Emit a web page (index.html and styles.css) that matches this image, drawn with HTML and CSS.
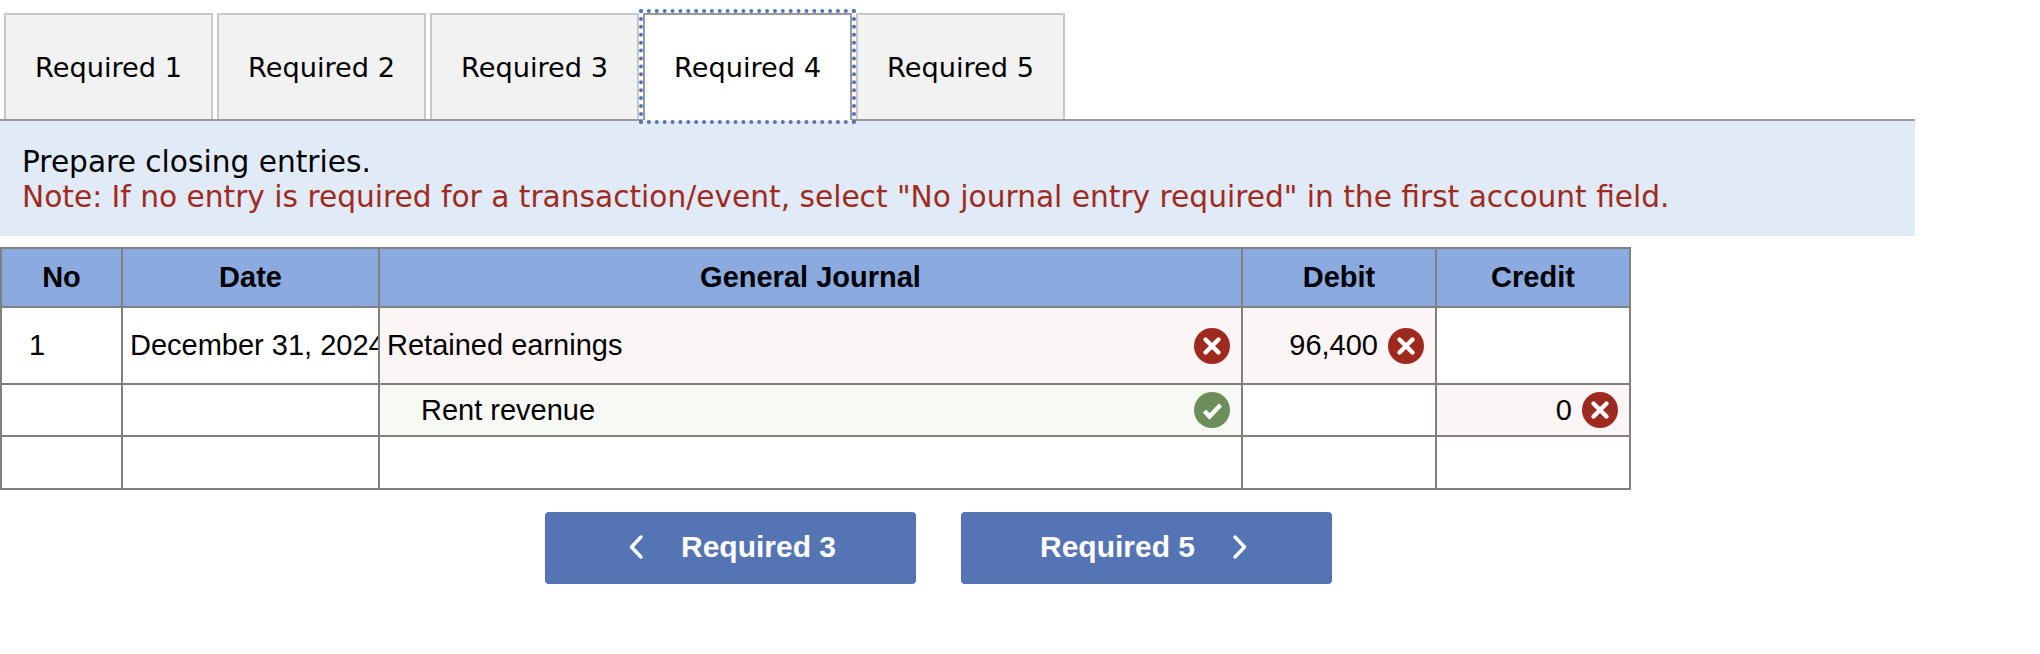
FILE: index.html
```html
<!DOCTYPE html>
<html lang="en">
<head>
    <meta charset="UTF-8">
    <title>Required 4</title>
    <link rel="stylesheet" href="styles.css">
</head>
<body>
    <div class="tabs">
        <div class="tab">Required 1</div>
        <div class="tab">Required 2</div>
        <div class="tab">Required 3</div>
        <div class="tab active">Required 4</div>
        <div class="tab">Required 5</div>
    </div>
    <div class="panel">
        <div>Prepare closing entries.</div>
        <div class="note">Note: If no entry is required for a transaction/event, select "No journal entry required" in the first account field.</div>
    </div>
    <table class="journal">
        <colgroup>
            <col class="col-no">
            <col class="col-date">
            <col class="col-account">
            <col class="col-debit">
            <col class="col-credit">
        </colgroup>
        <tr class="head">
            <th>No</th>
            <th>Date</th>
            <th>General Journal</th>
            <th>Debit</th>
            <th>Credit</th>
        </tr>
        <tr class="row-1">
            <td class="no">1</td>
            <td class="date"><div class="clip">December 31, 2024</div></td>
            <td class="wrong">
                <div class="cell account">Retained earnings
                    <svg class="icon" viewBox="0 0 36 36"><circle cx="18" cy="18" r="18" fill="#9e2a1f"/><path d="M11.5 11.5l13 13M24.5 11.5l-13 13" stroke="#fff" stroke-width="4.4" stroke-linecap="round"/></svg>
                </div>
            </td>
            <td class="wrong">
                <div class="cell amount">96,400
                    <svg class="icon" viewBox="0 0 36 36"><circle cx="18" cy="18" r="18" fill="#9e2a1f"/><path d="M11.5 11.5l13 13M24.5 11.5l-13 13" stroke="#fff" stroke-width="4.4" stroke-linecap="round"/></svg>
                </div>
            </td>
            <td></td>
        </tr>
        <tr class="row-2">
            <td></td>
            <td></td>
            <td class="right">
                <div class="cell account indent">Rent revenue
                    <svg class="icon" viewBox="0 0 36 36"><circle cx="18" cy="18" r="18" fill="#6b8e5a"/><path d="M10.500 19l5 5.500L26.500 13" fill="none" stroke="#fff" stroke-width="4.400"/></svg>
                </div>
            </td>
            <td></td>
            <td class="wrong">
                <div class="cell amount">0
                    <svg class="icon" viewBox="0 0 36 36"><circle cx="18" cy="18" r="18" fill="#9e2a1f"/><path d="M11.5 11.5l13 13M24.5 11.5l-13 13" stroke="#fff" stroke-width="4.4" stroke-linecap="round"/></svg>
                </div>
            </td>
        </tr>
        <tr class="row-3">
            <td></td>
            <td></td>
            <td></td>
            <td></td>
            <td></td>
        </tr>
    </table>
    <div class="nav">
        <button class="nav-btn prev">
            <svg class="chevron" viewBox="0 0 16 24"><path d="M13 2L3.500 12 13 22" fill="none" stroke="#fff" stroke-width="3.400" stroke-linecap="round" stroke-linejoin="round"/></svg>
            Required 3
        </button>
        <button class="nav-btn next">
            Required 5
            <svg class="chevron" viewBox="0 0 16 24"><path d="M3 2l9.500 10L3 22" fill="none" stroke="#fff" stroke-width="3.400" stroke-linecap="round" stroke-linejoin="round"/></svg>
        </button>
    </div>
</body>
</html>
```

FILE: styles.css
```css
body {
    margin: 0;
    background-color: #fff;
    color: #000;
    font-family: "Liberation Sans", Arial, sans-serif;
}

.tabs {
    display: flex;
    gap: 4px;
    width: 1911px;
    height: 106px;
    margin-top: 13px;
    padding-left: 4px;
    border-bottom: 2px solid #999;
}

.tab {
    width: 209px;
    height: 106px;
    box-sizing: border-box;
    padding-top: 37px;
    text-align: center;
    background-color: #f2f2f2;
    border: 2px solid #c8c8c8;
    border-bottom: none;
    font-family: "DejaVu Sans", sans-serif;
    font-size: 27.200px;
    line-height: 32px;
}

.active {
    background-color: #fff;
    border: 2px solid #999;
    border-bottom: none;
    height: 107px;
    box-shadow: 0 1px 0 #fff;
    outline: 4px dotted #5574b3;
    position: relative;
}

.panel {
    width: 1915px;
    height: 115px;
    box-sizing: border-box;
    padding: 23px 22px;
    background-color: #e0ebf7;
    font-family: "DejaVu Sans", sans-serif;
    font-size: 29.650px;
    line-height: 35px;
}

.note {
    color: #9f2a1e;
}

.journal {
    width: 1630px;
    margin-top: 11px;
    table-layout: fixed;
    border-collapse: collapse;
    font-size: 29px;
}

.col-no { width: 121px; }
.col-date { width: 257px; }
.col-account { width: 863px; }
.col-debit { width: 194px; }
.col-credit { width: 194px; }

.journal th,
.journal td {
    border: 2px solid #808080;
    padding: 0;
}

.head {
    height: 59px;
    background-color: #8aaae0;
}

.head th {
    font-size: 29px;
}

.row-1 { height: 77px; }
.row-2 { height: 52px; }
.row-3 { height: 53px; }

.journal .no {
    padding-left: 27px;
}

.journal .date {
    padding-left: 7px;
}

.clip {
    white-space: nowrap;
    overflow: hidden;
}

.wrong { background-color: #fbf5f5; }
.right { background-color: #f7f9f5; }

.cell {
    display: flex;
    align-items: center;
    padding: 0 11px 0 7px;
}

.account {
    justify-content: space-between;
}

.indent {
    padding-left: 41px;
}

.amount {
    justify-content: flex-end;
    gap: 10px;
}

.icon {
    width: 36px;
    height: 36px;
    flex-shrink: 0;
}

.nav {
    display: flex;
    gap: 45px;
    margin-top: 22px;
    padding-left: 545px;
}

.nav-btn {
    display: flex;
    align-items: center;
    justify-content: center;
    gap: 37px;
    width: 371px;
    height: 72px;
    padding: 0 0 2px;
    border: none;
    border-radius: 4px;
    background-color: #5574b3;
    color: #fff;
    font-family: "Liberation Sans", Arial, sans-serif;
    font-size: 30px;
    font-weight: bold;
}

.prev {
    padding-left: 3px;
}

.next {
    padding-right: 5px;
}

.chevron {
    width: 16px;
    height: 24px;
}
```
